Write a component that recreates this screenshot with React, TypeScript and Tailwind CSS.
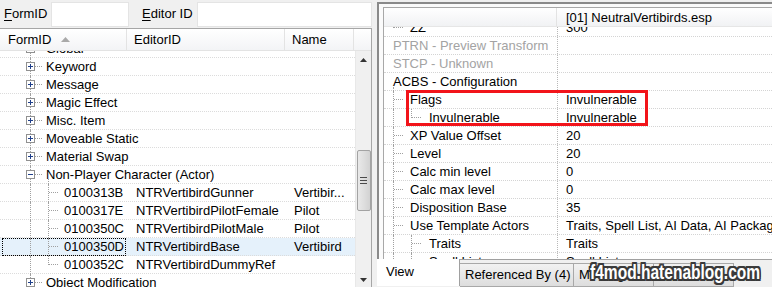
import React from "react"

type LeftRow = {
  kind: "group" | "item"
  text?: string
  open?: boolean
  id?: string
  editor?: string
  name?: string
  last?: boolean
  selected?: boolean
}

const LEFT_ROWS: LeftRow[] = [
  { kind: "group", text: "Global" },
  { kind: "group", text: "Keyword" },
  { kind: "group", text: "Message" },
  { kind: "group", text: "Magic Effect" },
  { kind: "group", text: "Misc. Item" },
  { kind: "group", text: "Moveable Static" },
  { kind: "group", text: "Material Swap" },
  { kind: "group", text: "Non-Player Character (Actor)", open: true },
  { kind: "item", id: "0100313B", editor: "NTRVertibirdGunner", name: "Vertibir..." },
  { kind: "item", id: "0100317E", editor: "NTRVertibirdPilotFemale", name: "Pilot" },
  { kind: "item", id: "0100350C", editor: "NTRVertibirdPilotMale", name: "Pilot" },
  { kind: "item", id: "0100350D", editor: "NTRVertibirdBase", name: "Vertibird", selected: true },
  { kind: "item", id: "0100352C", editor: "NTRVertibirdDummyRef", last: true },
  { kind: "group", text: "Object Modification" },
]

type RightRow = {
  label: string
  value?: string
  level: 0 | 1 | 2
  muted?: boolean
  // tree line hints
  rootLine?: "full" | "half" | "lower" | "none"
  subLine?: "full" | "half" | "none"
}

const RIGHT_ROWS: RightRow[] = [
  { label: "ZZ", value: "300", level: 1, rootLine: "half" },
  { label: "PTRN - Preview Transform", level: 0, muted: true },
  { label: "STCP - Unknown", level: 0, muted: true },
  { label: "ACBS - Configuration", level: 0, rootLine: "lower" },
  { label: "Flags", value: "Invulnerable", level: 1, rootLine: "full", subLine: "none" },
  { label: "Invulnerable", value: "Invulnerable", level: 2, rootLine: "full", subLine: "half" },
  { label: "XP Value Offset", value: "20", level: 1, rootLine: "full" },
  { label: "Level", value: "20", level: 1, rootLine: "full" },
  { label: "Calc min level", value: "0", level: 1, rootLine: "full" },
  { label: "Calc max level", value: "0", level: 1, rootLine: "full" },
  { label: "Disposition Base", value: "35", level: 1, rootLine: "full" },
  { label: "Use Template Actors", value: "Traits, Spell List, AI Data, AI Packages, Model/Animation", level: 1, rootLine: "full" },
  { label: "Traits", value: "Traits", level: 2, rootLine: "full", subLine: "full" },
  { label: "Spell List", value: "Spell List", level: 2, rootLine: "full", subLine: "full" },
]

const dotV = "absolute w-0 border-l border-dotted border-[#a0a0a0]"
const dotH = "absolute h-0 border-t border-dotted border-[#a0a0a0]"

function ExpandBox({ open }: { open?: boolean }) {
  return (
    <div className="absolute left-[26px] top-[4px] w-[9px] h-[9px] bg-white border border-[#919191] flex items-center justify-center">
      <div className="relative w-[5px] h-[5px]">
        <div className="absolute left-0 top-[2px] w-[5px] h-[1px] bg-[#1f3f8a]" />
        {!open && <div className="absolute left-[2px] top-0 w-[1px] h-[5px] bg-[#1f3f8a]" />}
      </div>
    </div>
  )
}

function LeftTreeRow({ row }: { row: LeftRow }) {
  return (
    <div
      className={`flex h-[18px] shrink-0 border-b border-dotted border-[#dcdcdc] ${
        row.selected ? "bg-[#e5f1fb]" : ""
      }`}
    >
      {row.kind === "group" ? (
        <div className="relative flex-1 h-full">
          <div className={`${dotV} left-[30px] top-0 h-[18px]`} />
          <div className={`${dotH} left-[35px] top-[8px] w-[7px]`} />
          <ExpandBox open={row.open} />
          {row.open && <div className={`${dotV} left-[48px] top-[13px] h-[5px]`} />}
          <span className="absolute left-[46px] top-0 leading-[17px] whitespace-nowrap">{row.text}</span>
        </div>
      ) : (
        <>
          <div className="relative w-[127px] h-full shrink-0">
            <div className={`${dotV} left-[30px] top-0 h-[18px]`} />
            <div className={`${dotV} left-[48px] top-0 ${row.last ? "h-[9px]" : "h-[18px]"}`} />
            <div className={`${dotH} left-[49px] top-[8px] w-[9px]`} />
            <span className="absolute left-[64px] top-0 leading-[17px]">{row.id}</span>
            {row.selected && (
              <div className="absolute left-[2px] right-[1px] top-0 bottom-[-1px] border border-dotted border-black" />
            )}
          </div>
          <div className="w-[158px] shrink-0 pl-[9px] leading-[17px] whitespace-nowrap">{row.editor}</div>
          <div className="flex-1 pl-[9px] leading-[17px] whitespace-nowrap">{row.name}</div>
        </>
      )}
    </div>
  )
}

function LeftPane() {
  return (
    <div className="w-[372px] shrink-0 flex flex-col">
      <div className="h-[28px] shrink-0 flex items-start pt-[2px]">
        <span className="ml-[4px] w-[47px] leading-[24px]">
          <span className="underline underline-offset-2">F</span>ormID
        </span>
        <div className="w-[78px] h-[25px] bg-white border border-[#e4e4e4]" />
        <span className="ml-[13px] w-[55px] leading-[24px]">
          <span className="underline underline-offset-2">E</span>ditor ID
        </span>
        <div className="flex-1 h-[25px] bg-white border border-[#e4e4e4]" />
      </div>
      <div className="flex-1 min-h-0 bg-white border-t border-r border-[#a6a6a6] flex flex-col">
        <div className="h-[22px] shrink-0 flex bg-gradient-to-b from-white to-[#f3f4f6] border-b border-[#e3e3e3]">
          <div className="w-[127px] flex items-center pl-[8px] border-r border-[#e3e3e3]">
            FormID
            <svg width="9" height="5" viewBox="0 0 9 5" className="ml-[10px]">
              <path d="M0 5 L4.5 0 L9 5 Z" fill="#a9a9a9" />
            </svg>
          </div>
          <div className="w-[158px] flex items-center pl-[7px] border-r border-[#e3e3e3]">EditorID</div>
          <div className="w-[69px] flex items-center pl-[7px] border-r border-[#e3e3e3]">Name</div>
          <div className="flex-1" />
        </div>
        <div className="flex-1 min-h-0 flex">
          <div className="w-[355px] overflow-hidden flex flex-col">
            <div className="-mt-[11px] flex flex-col">
              {LEFT_ROWS.map((r, i) => (
                <LeftTreeRow key={i} row={r} />
              ))}
            </div>
          </div>
          <div className="flex-1 bg-[#f0f0f0] border-l border-[#e8e8e8] flex flex-col items-center">
            <svg width="7" height="4" viewBox="0 0 7 4" className="mt-[7px]">
              <path d="M0 4 L3.5 0 L7 4 Z" fill="#333" />
            </svg>
            <div className="mt-[88px] w-[14px] h-[61px] rounded-[2px] border border-[#a3a3a3] bg-gradient-to-r from-[#e9e9e9] via-[#dedede] to-[#d2d2d2] flex flex-col items-center justify-center gap-[2px]">
              <div className="w-[7px] h-[1px] bg-[#4a4a4a]" />
              <div className="w-[7px] h-[1px] bg-[#4a4a4a]" />
              <div className="w-[7px] h-[1px] bg-[#4a4a4a]" />
            </div>
            <div className="flex-1" />
            <svg width="7" height="4" viewBox="0 0 7 4" className="mb-[5px]">
              <path d="M0 0 L3.5 4 L7 0 Z" fill="#333" />
            </svg>
          </div>
        </div>
      </div>
    </div>
  )
}

function RightTreeRow({ row }: { row: RightRow }) {
  const textLeft = row.level === 0 ? "pl-[9px]" : row.level === 1 ? "pl-[26px]" : "pl-[45px]"
  return (
    <div className="flex h-[18px] shrink-0 border-b border-dotted border-[#d4d4d4]">
      <div className={`relative w-[173px] shrink-0 h-full ${textLeft} leading-[17px] whitespace-nowrap ${row.muted ? "text-[#a3a3a3]" : ""}`}>
        {row.rootLine === "full" && <div className={`${dotV} left-[9px] top-0 h-[18px]`} />}
        {row.rootLine === "half" && <div className={`${dotV} left-[9px] top-0 h-[9px]`} />}
        {row.rootLine === "lower" && <div className={`${dotV} left-[9px] top-[14px] h-[4px]`} />}
        {row.level === 1 && <div className={`${dotH} left-[10px] top-[8px] w-[9px]`} />}
        {row.level === 2 && row.subLine === "full" && <div className={`${dotV} left-[27px] top-0 h-[18px]`} />}
        {row.level === 2 && row.subLine === "half" && <div className={`${dotV} left-[27px] top-0 h-[9px]`} />}
        {row.level === 2 && <div className={`${dotH} left-[28px] top-[8px] w-[9px]`} />}
        {row.label}
      </div>
      <div className="flex-1 h-full border-l border-dotted border-[#b8b8b8] pl-[8px] leading-[17px] whitespace-nowrap overflow-hidden">
        {row.value}
      </div>
    </div>
  )
}

function RightPane() {
  return (
    <div className="flex-1 flex flex-col min-w-0">
      <div className="flex-1 min-h-0 pt-[2px] flex flex-col">
        <div className="flex-1 min-h-0 border-l-2 border-t-2 border-[#8a8a8a] bg-[#fbfbfb] pl-[4px] pt-[3px] flex flex-col">
          <div className="relative flex-1 min-h-0 bg-white border-l border-t border-[#a8a8a8] flex flex-col overflow-hidden">
            <div className="h-[19px] shrink-0 flex bg-gradient-to-b from-white to-[#f1f2f4] border-b border-[#e6e6e6]">
              <div className="w-[173px] border-r border-[#e3e3e3]" />
              <div className="flex-1 pl-[9px] leading-[19px] whitespace-nowrap">[01] NeutralVertibirds.esp</div>
            </div>
            <div className="flex-1 min-h-0 overflow-hidden">
              <div className="-mt-[8px] flex flex-col">
                {RIGHT_ROWS.map((r, i) => (
                  <RightTreeRow key={i} row={r} />
                ))}
              </div>
            </div>
            {/* highlight box */}
            <div className="absolute left-[22px] top-[82px] w-[242px] h-[36px] border-[3px] border-[#f2141a]" />
          </div>
        </div>
      </div>
      <div className="h-[28px] shrink-0 bg-[#f0f0f0] border-t border-[#a0a0a0] flex items-start">
        <div className="w-[83px] h-full -mt-px bg-white border-r border-[#a0a0a0] pl-[9px] leading-[26px]">View</div>
        <div className="mt-[3px] w-[114px] h-[24px] bg-gradient-to-b from-[#f2f2f2] to-[#dddddd] border border-l-0 border-[#a8a8a8] pl-[5px] leading-[22px] whitespace-nowrap">
          Referenced By (4)
        </div>
        <div className="mt-[3px] w-[80px] h-[24px] bg-gradient-to-b from-[#f2f2f2] to-[#dddddd] border border-l-0 border-[#a8a8a8] pl-[5px] leading-[22px] whitespace-nowrap">
          Messages
        </div>
        <div className="mt-[3px] w-[80px] h-[24px] bg-gradient-to-b from-[#f2f2f2] to-[#dddddd] border border-l-0 border-[#a8a8a8] pl-[5px] leading-[22px] whitespace-nowrap overflow-hidden">
          Information
        </div>
      </div>
    </div>
  )
}

export default function App() {
  return (
    <div className="relative w-[772px] h-[287px] overflow-hidden bg-[#f0f0f0] flex text-[13px] text-black font-['Liberation_Sans',Arial,sans-serif]">
      <LeftPane />
      <div className="w-[5px] shrink-0" />
      <RightPane />
      {/* blog watermark */}
      <div className="absolute left-[590px] top-[258px] h-[28px] flex items-center pointer-events-none">
        <span className="inline-block origin-left scale-x-[0.74] text-[21px] font-bold text-white whitespace-nowrap [text-shadow:0_0_2px_#3a3a3a,1px_1px_0_#3a3a3a,-1px_-1px_0_#3a3a3a,1px_-1px_0_#3a3a3a,-1px_1px_0_#3a3a3a,2px_0_0_#3a3a3a,-2px_0_0_#3a3a3a,0_2px_0_#3a3a3a,0_-2px_0_#3a3a3a,2px_2px_0_#3a3a3a,-2px_-2px_0_#3a3a3a,2px_-2px_0_#3a3a3a,-2px_2px_0_#3a3a3a]">
          f4mod.hatenablog.com
        </span>
      </div>
    </div>
  )
}
